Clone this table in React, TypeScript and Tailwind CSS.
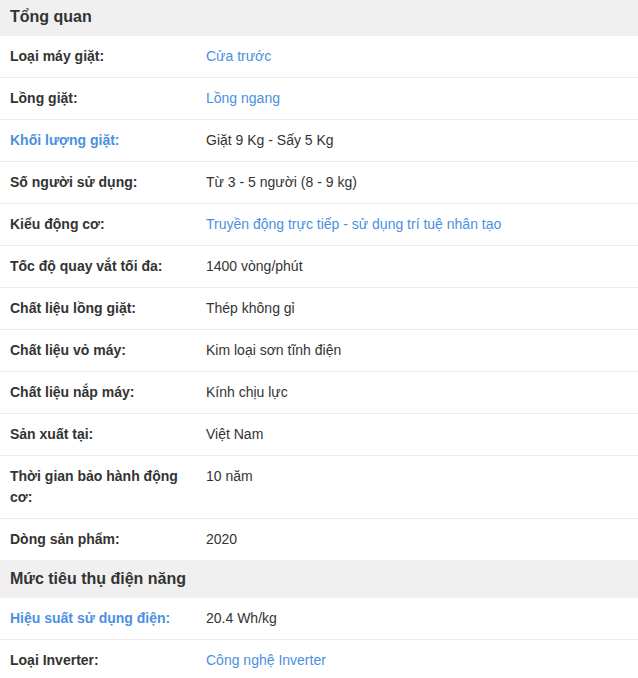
import React from 'react';

type Row = {
  label: string;
  value: string;
  labelLink?: boolean;
  valueLink?: boolean;
};

type Section = {
  title: string;
  rows: Row[];
};

const sections: Section[] = [
  {
    title: 'Tổng quan',
    rows: [
      { label: 'Loại máy giặt:', value: 'Cửa trước', valueLink: true },
      { label: 'Lồng giặt:', value: 'Lồng ngang', valueLink: true },
      { label: 'Khối lượng giặt:', value: 'Giặt 9 Kg - Sấy 5 Kg', labelLink: true },
      { label: 'Số người sử dụng:', value: 'Từ 3 - 5 người (8 - 9 kg)' },
      { label: 'Kiểu động cơ:', value: 'Truyền động trực tiếp - sử dụng trí tuệ nhân tạo', valueLink: true },
      { label: 'Tốc độ quay vắt tối đa:', value: '1400 vòng/phút' },
      { label: 'Chất liệu lồng giặt:', value: 'Thép không gỉ' },
      { label: 'Chất liệu vỏ máy:', value: 'Kim loại sơn tĩnh điện' },
      { label: 'Chất liệu nắp máy:', value: 'Kính chịu lực' },
      { label: 'Sản xuất tại:', value: 'Việt Nam' },
      { label: 'Thời gian bảo hành động cơ:', value: '10 năm' },
      { label: 'Dòng sản phẩm:', value: '2020' },
    ],
  },
  {
    title: 'Mức tiêu thụ điện năng',
    rows: [
      { label: 'Hiệu suất sử dụng điện:', value: '20.4 Wh/kg', labelLink: true },
      { label: 'Loại Inverter:', value: 'Công nghệ Inverter', valueLink: true },
    ],
  },
];

const SpecRow = ({ row, last }: { row: Row; last: boolean }) => (
  <div className={`flex text-[14px] leading-[21px] ${last ? '' : 'border-b border-[#eeeeee]'}`}>
    <div
      className={`w-[206px] shrink-0 py-[10px] pl-[10px] pr-[10px] font-bold ${
        row.labelLink ? 'text-[#4a90e2]' : 'text-[#333333]'
      }`}
    >
      {row.label}
    </div>
    <div className={`flex-1 py-[10px] ${row.valueLink ? 'text-[#4a90e2]' : 'text-[#333333]'}`}>
      {row.value}
    </div>
  </div>
);

export default function App() {
  return (
    <div className="w-[638px] -mt-[2px] bg-white font-['Liberation_Sans',Arial,sans-serif]">
      {sections.map((section) => (
        <div key={section.title}>
          <div className="flex h-[38px] items-center bg-[#f0f0f0] px-[10px] text-[16px] font-bold text-[#333333]">
            {section.title}
          </div>
          {section.rows.map((row, i) => (
            <SpecRow key={row.label} row={row} last={i === section.rows.length - 1} />
          ))}
        </div>
      ))}
    </div>
  );
}
